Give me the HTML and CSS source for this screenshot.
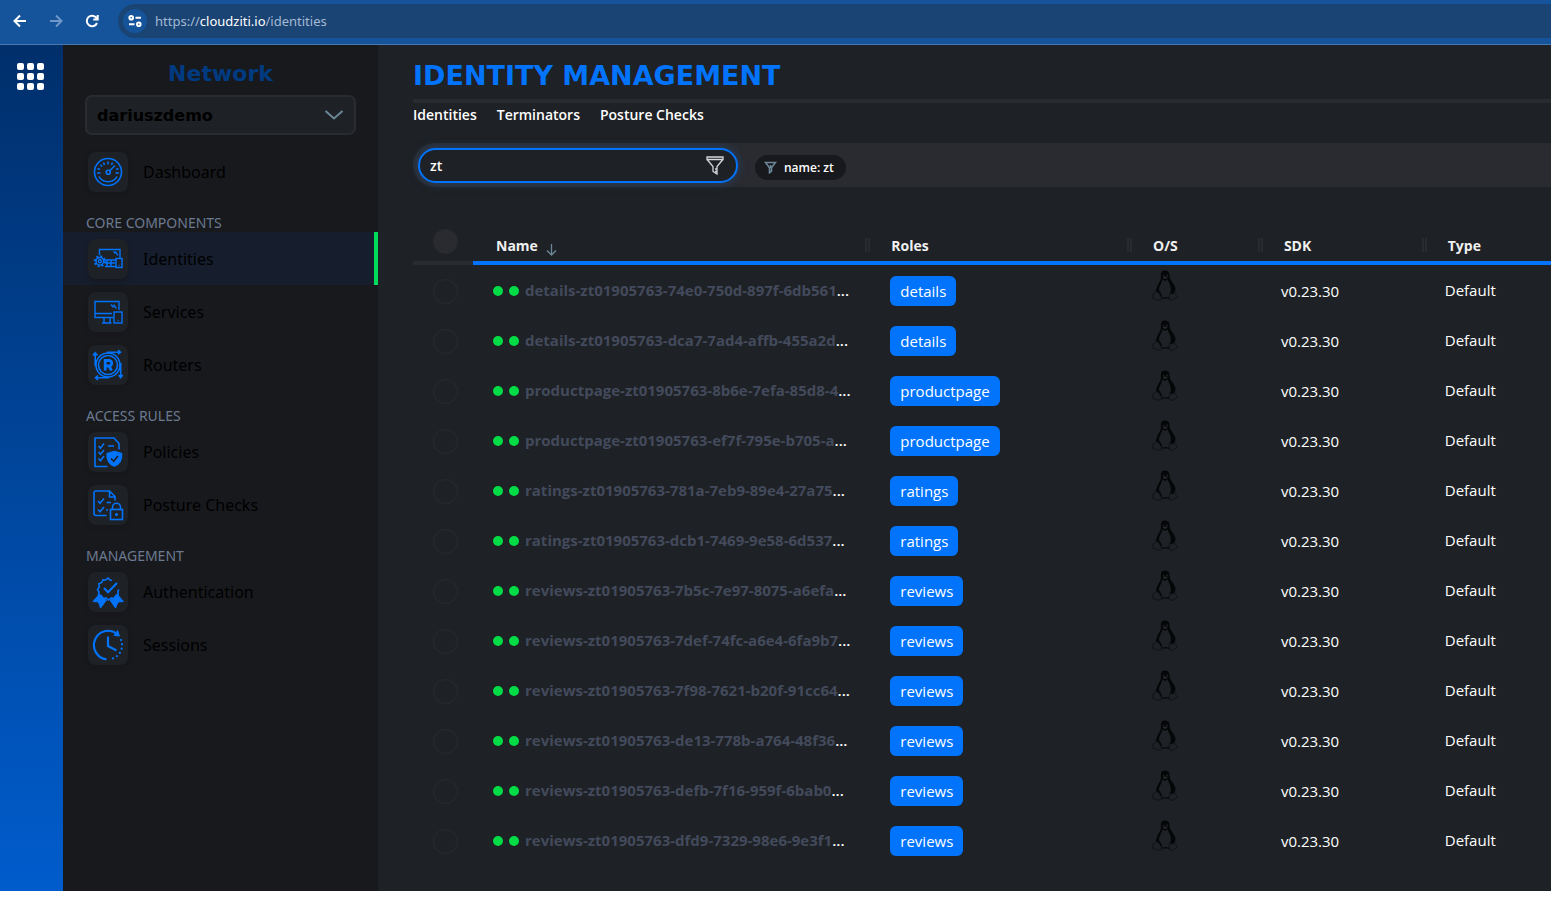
FILE: index.html
```html
<!DOCTYPE html>
<html lang="en">
<head>
<meta charset="utf-8">
<title>Identity Management</title>
<link rel="stylesheet" href="styles.css">
</head>
<body>
<svg class="sprite" aria-hidden="true">
  <symbol id="tux" viewBox="0 0 26 31">
    <path fill="#050607" d="M13 0.500C10 .5 8.700 2.700 8.900 5.500C9 9 8.900 10.200 7.200 12.500C5.600 14.700 5.200 17 4.200 19.400C3.600 21 3.900 22 4.200 23L8.800 27.500L17.500 28L21.500 23.500C22.900 22.500 23.800 20 23.300 17.800C22.600 14.700 20.500 12.500 18.900 10.200C17.400 8 17.800 6.500 17.400 4.300C17 1.700 15.500 .5 13 .5Z"/>
    <path fill="#1e2125" d="M10.500 9.500L13.200 11L15.500 9.300C16.500 12.500 18.800 15 18.800 19C18.800 22.500 18 25 17.300 27.500L9.800 27.500C10.800 24.500 7.500 21.500 6.800 19.500C7.300 15.500 10 12.500 10.500 9.500Z"/>
    <path fill="#1e2125" d="M10.600 5.200a1 1.300 0 1 1 1.600 1.600zM14 5.300a1.200 1.400 0 1 1 2 1.500z"/>
    <path fill="#25272a" d="M10.300 7.600L13 6.300L15.800 7.500L13 9.200Z"/>
    <path fill="#1e2125" stroke="#101214" stroke-width=".8" stroke-linejoin="round" d="M4.700 21.500C6.500 21.700 8 25 9.300 27C10.500 29.500 8.500 30.700 6.300 29.900C4.300 29 2.300 29.200 .9 28.500C.3 27.500 1.200 26 .9 24.500C.8 23.300 3 23.500 4.700 21.500Z"/>
    <path fill="#1e2125" stroke="#101214" stroke-width=".8" stroke-linejoin="round" d="M17.900 22.500C18.500 24.500 20.800 24.500 22.500 22.800C23.700 23 23 25 25.300 26.500C25.600 28 22.500 28.700 21 30C19 31 17 30 17.100 28C17.400 26 17 24 17.900 22.500Z"/>
    <path fill="none" stroke="#08090a" d="M9.500 28.500C12 27.800 14.500 27.800 17.500 28.500"/>
  </symbol>
</svg>

<header class="browser">
  <button class="browser-btn" aria-label="Back"><svg width="14" height="14" viewBox="0 0 14 14"><path d="M13 7H2M7 1.500L1.500 7L7 12.500"/></svg></button>
  <button class="browser-btn dim" aria-label="Forward"><svg width="14" height="14" viewBox="0 0 14 14"><path d="M1 7h11M7 1.500L12.500 7L7 12.500"/></svg></button>
  <button class="browser-btn" aria-label="Reload"><svg width="14" height="14" viewBox="0 0 14 14"><path d="M12 9A5.300 5.300 0 1 1 11.300 3.700L12.500 5.200M12.700 1v4.500H8.300"/></svg></button>
  <div class="address">
    <span class="site-info"><svg width="14" height="12" viewBox="0 0 14 12"><circle cx="3.200" cy="2.800" r="1.800"/><path d="M7.500 2.800H13M1 9.200h5.500"/><circle cx="10.800" cy="9.200" r="1.800"/></svg></span>
    <span class="url">https://<b>cloudziti.io</b>/identities</span>
  </div>
</header>

<div class="app">
  <aside class="rail">
    <button class="apps" aria-label="Apps"><i></i><i></i><i></i><i></i><i></i><i></i><i></i><i></i><i></i></button>
  </aside>

  <nav class="sidebar">
    <label class="network-label" for="network">Network</label>
    <div class="network-box">
      <select id="network" class="network"><option>dariuszdemo</option></select>
      <svg class="chevron" width="20" height="12" viewBox="0 0 20 12"><path d="M1.500 2L10 9.500L18.500 2"/></svg>
    </div>

    <a class="item" href="#"><span class="tile"><svg viewBox="0 0 32 32"><circle cx="16" cy="16" r="13.500"/><circle cx="16.200" cy="16.300" r="2"/><path d="M17.700 14.800L23 9.500M16 5.500v3M11.500 6.500l1 2.500M20.500 6.500l-1 2.500M8.500 8.800l1.500 1.700M5.500 12.500l2.500 1M26.500 12.500l-2.500 1M5 17h3.500M23.500 17H27M7 20.500C10.500 27.500 21.500 27.500 25 20.500"/></svg></span>Dashboard</a>

    <h2 class="group">CORE COMPONENTS</h2>
    <a class="item active" href="#"><span class="tile"><svg viewBox="0 0 32 32" class="thin"><path d="M7.500 12V6.500H28V15M12 17h12M13 20h10M15 17v6M19 17v6M13 23.500h11M21.500 8.500l2 2M23.500 8.500l2.500 4"/><rect x="24" y="15.500" width="6" height="9"/><path d="M26.500 22.500h1"/><circle cx="7.800" cy="18.300" r="3.800"/><circle cx="7.800" cy="18.300" r="1.500"/><circle cx="7.800" cy="18.300" r="5" stroke-dasharray="2 1.900" stroke-width="2"/></svg></span>Identities</a>
    <a class="item" href="#"><span class="tile"><svg viewBox="0 0 32 32" class="thin"><path d="M27 14V5.500H3V21.500H21M3 17.500H20M12 22v4.500M18 22v4.500M10 27H19.500M19 8.500l2.500 3M21.500 8.500l3 4"/><rect x="22" y="16" width="8" height="11"/><path d="M25.500 24.500h1"/></svg></span>Services</a>
    <a class="item" href="#"><span class="tile"><svg viewBox="0 0 32 32"><circle cx="16" cy="16" r="12"/><circle cx="16" cy="16" r="9.500"/><path stroke-width="2.800" d="M13.200 21.500V11.500H17a2.400 2.400 0 0 1 0 5.500H13.500M17 17l2.500 4.500"/><path d="M15 3.200H28M26 1.200l2.500 2L26 5.200M28.700 14V28.500M26.700 26l2 2.700l2-2.700M17 28.800H3.500M6 26.500l-2.500 2.300L6 31M3.200 17V4M1 6.500L3.200 3.700L5.500 6.500"/></svg></span>Routers</a>

    <h2 class="group">ACCESS RULES</h2>
    <a class="item" href="#"><span class="tile"><svg viewBox="0 0 32 32"><path d="M15.500 30.500H3V2H22L27 7.500V13.500M6.500 10l2 2.200L12 7.500M6.500 16l2 2.200L12 14M6.500 22.500l2 2.200L12 20M16 10h6"/><path fill="#0273fb" d="M22.300 15.500L29.500 17.500C30 23 28.500 27.500 22.300 30C16 27.500 14.800 23 15.200 17.500Z"/><path stroke="#1c2025" d="M19 22.500l2.700 2.800L26 20"/></svg></span>Policies</a>
    <a class="item" href="#"><span class="tile"><svg viewBox="0 0 32 32"><path d="M14.500 26.500H4a2 2 0 0 1-2-2V4a2 2 0 0 1 2-2H17.500L23 7.500V11.500M17.500 2.500V8H23M6 12l2 2.300L12 9.500M6 20.500l2 2.300L12 18M14.500 13.500h4.500M14 21h2"/><rect x="18.500" y="20.500" width="12" height="10"/><path d="M20.500 20V18a4 3.700 0 0 1 8 0v2"/><circle cx="24.500" cy="25.500" r=".8"/></svg></span>Posture Checks</a>

    <h2 class="group">MANAGEMENT</h2>
    <a class="item" href="#"><span class="tile"><svg viewBox="0 0 32 32"><path d="M20 4.500L18 4L16 2L13.700 4L11 3.800L9.800 6.500L6.800 7.700L7.300 11L5.500 13.500L7 16L6.500 19L9.500 20L11.500 22.800L14 22L16.500 24L19 22L22 22.500L23.500 20L26.200 18.500L25.800 15.500L27 13.500"/><path stroke-width="2.200" d="M12 12l4 4.200L25 7"/><path fill="#0273fb" stroke-width="1" d="M7.500 18L1 25.500L6.500 26L8.500 32L14.500 24L11 23L9.500 20.500ZM25 18L31.500 25.500L26 26L23.500 32L18 24L21.500 23L23 20.500Z"/></svg></span>Authentication</a>
    <a class="item" href="#"><span class="tile"><svg viewBox="0 0 32 32" class="thick"><path d="M14.500 30.300A14.300 14.300 0 1 1 25 4.800M16 7.500v9.500L24.500 21.500"/><path fill="#0273fb" stroke-width="1" d="M25.500 1.500L27.500 7L22 6.500Z"/><path stroke-linecap="round" stroke-dasharray="0.100 4.300" d="M29 11A14 14 0 0 1 17.500 30.200"/></svg></span>Sessions</a>
  </nav>

  <main class="main">
    <h1 class="title">IDENTITY MANAGEMENT</h1>
    <div class="tabs">
      <a href="#">Identities</a><a href="#">Terminators</a><a href="#">Posture Checks</a>
    </div>
    <div class="filters">
      <div class="search">
        <input class="search-input" type="text" aria-label="Filter" value="zt">
        <svg class="funnel" width="18" height="19" viewBox="0 0 18 19"><path d="M1 1h16v2.500H1zM1.500 4L7 10.500V15.500L11 18V10.500L16.500 4M9 13h2M9 15.500h2"/></svg>
      </div>
      <span class="chip"><svg width="13" height="13" viewBox="0 0 13 13"><path d="M1.500 1.500h10L7.500 6.700v3.500l-2 1.500v-5zM6.500 4v3"/></svg>name: zt</span>
    </div>

    <table class="grid">
      <colgroup><col class="c-check"><col class="c-name"><col class="c-roles"><col class="c-os"><col class="c-sdk"><col></colgroup>
      <thead>
        <tr>
          <th class="check"><input type="checkbox" class="round filled" aria-label="Select all"></th>
          <th class="name-head">Name <svg class="sort" width="11" height="12" viewBox="0 0 11 12"><path d="M5.500 0v11M1 6.500l4.500 4.500L10 6.500"/></svg></th>
          <th>Roles</th><th>O/S</th><th>SDK</th><th class="last">Type</th>
        </tr>
      </thead>
      <tbody>
        <tr><td class="check"><input type="checkbox" class="round" aria-label="Select row"></td><td><div class="ident"><i></i><i></i><b>details-zt01905763-74e0-750d-897f-6db561<em>...</em></b></div></td><td class="roles"><span class="pill">details</span></td><td class="os"><svg><use href="#tux"/></svg></td><td class="plain sdk">v0.23.30</td><td class="plain">Default</td></tr>
        <tr><td class="check"><input type="checkbox" class="round" aria-label="Select row"></td><td><div class="ident"><i></i><i></i><b>details-zt01905763-dca7-7ad4-affb-455a2d<em>...</em></b></div></td><td class="roles"><span class="pill">details</span></td><td class="os"><svg><use href="#tux"/></svg></td><td class="plain sdk">v0.23.30</td><td class="plain">Default</td></tr>
        <tr><td class="check"><input type="checkbox" class="round" aria-label="Select row"></td><td><div class="ident"><i></i><i></i><b>productpage-zt01905763-8b6e-7efa-85d8-4<em>...</em></b></div></td><td class="roles"><span class="pill">productpage</span></td><td class="os"><svg><use href="#tux"/></svg></td><td class="plain sdk">v0.23.30</td><td class="plain">Default</td></tr>
        <tr><td class="check"><input type="checkbox" class="round" aria-label="Select row"></td><td><div class="ident"><i></i><i></i><b>productpage-zt01905763-ef7f-795e-b705-a<em>...</em></b></div></td><td class="roles"><span class="pill">productpage</span></td><td class="os"><svg><use href="#tux"/></svg></td><td class="plain sdk">v0.23.30</td><td class="plain">Default</td></tr>
        <tr><td class="check"><input type="checkbox" class="round" aria-label="Select row"></td><td><div class="ident"><i></i><i></i><b>ratings-zt01905763-781a-7eb9-89e4-27a75<em>...</em></b></div></td><td class="roles"><span class="pill">ratings</span></td><td class="os"><svg><use href="#tux"/></svg></td><td class="plain sdk">v0.23.30</td><td class="plain">Default</td></tr>
        <tr><td class="check"><input type="checkbox" class="round" aria-label="Select row"></td><td><div class="ident"><i></i><i></i><b>ratings-zt01905763-dcb1-7469-9e58-6d537<em>...</em></b></div></td><td class="roles"><span class="pill">ratings</span></td><td class="os"><svg><use href="#tux"/></svg></td><td class="plain sdk">v0.23.30</td><td class="plain">Default</td></tr>
        <tr><td class="check"><input type="checkbox" class="round" aria-label="Select row"></td><td><div class="ident"><i></i><i></i><b>reviews-zt01905763-7b5c-7e97-8075-a6efa<em>...</em></b></div></td><td class="roles"><span class="pill">reviews</span></td><td class="os"><svg><use href="#tux"/></svg></td><td class="plain sdk">v0.23.30</td><td class="plain">Default</td></tr>
        <tr><td class="check"><input type="checkbox" class="round" aria-label="Select row"></td><td><div class="ident"><i></i><i></i><b>reviews-zt01905763-7def-74fc-a6e4-6fa9b7<em>...</em></b></div></td><td class="roles"><span class="pill">reviews</span></td><td class="os"><svg><use href="#tux"/></svg></td><td class="plain sdk">v0.23.30</td><td class="plain">Default</td></tr>
        <tr><td class="check"><input type="checkbox" class="round" aria-label="Select row"></td><td><div class="ident"><i></i><i></i><b>reviews-zt01905763-7f98-7621-b20f-91cc64<em>...</em></b></div></td><td class="roles"><span class="pill">reviews</span></td><td class="os"><svg><use href="#tux"/></svg></td><td class="plain sdk">v0.23.30</td><td class="plain">Default</td></tr>
        <tr><td class="check"><input type="checkbox" class="round" aria-label="Select row"></td><td><div class="ident"><i></i><i></i><b>reviews-zt01905763-de13-778b-a764-48f36<em>...</em></b></div></td><td class="roles"><span class="pill">reviews</span></td><td class="os"><svg><use href="#tux"/></svg></td><td class="plain sdk">v0.23.30</td><td class="plain">Default</td></tr>
        <tr><td class="check"><input type="checkbox" class="round" aria-label="Select row"></td><td><div class="ident"><i></i><i></i><b>reviews-zt01905763-defb-7f16-959f-6bab0<em>...</em></b></div></td><td class="roles"><span class="pill">reviews</span></td><td class="os"><svg><use href="#tux"/></svg></td><td class="plain sdk">v0.23.30</td><td class="plain">Default</td></tr>
        <tr><td class="check"><input type="checkbox" class="round" aria-label="Select row"></td><td><div class="ident"><i></i><i></i><b>reviews-zt01905763-dfd9-7329-98e6-9e3f1<em>...</em></b></div></td><td class="roles"><span class="pill">reviews</span></td><td class="os"><svg><use href="#tux"/></svg></td><td class="plain sdk">v0.23.30</td><td class="plain">Default</td></tr>
      </tbody>
    </table>
  </main>
</div>
</body>
</html>
```
FILE: styles.css
```css
*, *::after { box-sizing: border-box; }

body {
  margin: 0;
  min-height: 100vh;
  display: flex;
  flex-direction: column;
  padding-bottom: 10px;
  background: #fff;
  color: #fff;
  font-family: "Open Sans", "Noto Sans", sans-serif;
  font-size: 14px;
}

a { color: inherit; text-decoration: none; }
button { border: 0; padding: 0; background: none; }
.sprite { display: none; }

/* Browser bar */
.browser {
  display: flex;
  align-items: center;
  gap: 22px;
  height: 45px;
  padding: 0 0 3px 13px;
  background: #15549a;
  border-bottom: 1px solid #4a79b0;
}
.browser-btn { display: flex; }
.browser-btn svg, .site-info svg { fill: none; stroke: #fff; stroke-width: 2; }
.browser-btn.dim svg { stroke: #6f98c8; }
.address {
  flex: 1;
  display: flex;
  align-items: center;
  gap: 8px;
  height: 34px;
  margin-left: -3px;
  padding-left: 5px;
  background: #1a4473;
  border-radius: 17px 0 0 17px;
}
.site-info {
  display: flex;
  align-items: center;
  justify-content: center;
  width: 24px;
  height: 24px;
  border-radius: 50%;
  background: #15549a;
}
.url { font-family: "Noto Sans", sans-serif; font-size: 13px; color: #a4b9d4; }
.url b { font-weight: 400; color: #fff; }

/* Page frame */
.app { flex: 1; display: flex; background: #1e2125; }
.rail {
  flex: none;
  width: 63px;
  padding: 18px 0 0 17px;
  background: linear-gradient(#002f6b, #005ccc);
}
.apps { display: grid; grid-template-columns: repeat(3, 7px); gap: 3px; }
.apps i { height: 7px; border-radius: 2px; background: #fff; }

/* Sidebar */
.sidebar {
  flex: none;
  width: 315px;
  padding-top: 14px;
  background: #18191d;
  font-family: "Noto Sans", "Open Sans", sans-serif;
}
.network-label {
  display: block;
  line-height: 30px;
  text-align: center;
  font-family: "DejaVu Sans", sans-serif;
  font-weight: 700;
  font-size: 22px;
  color: #003b82;
}
.network-box { position: relative; margin: 6px 22px 10px; }
.network {
  display: block;
  width: 100%;
  height: 40px;
  padding: 0 10px;
  appearance: none;
  border: 2px solid #2a2b30;
  border-radius: 7px;
  background: #1e2125;
  color: #000;
  font-family: "DejaVu Sans", sans-serif;
  font-weight: 700;
  font-size: 16px;
}
.chevron {
  position: absolute;
  right: 12px;
  top: 14px;
  fill: none;
  stroke: #6b8797;
  stroke-width: 2;
  pointer-events: none;
}
.group {
  margin: 0;
  padding: 15px 23px 0;
  line-height: 19px;
  font-size: 14px;
  font-weight: 400;
  color: #6b7a90;
}
.item {
  display: flex;
  align-items: center;
  gap: 15px;
  height: 53px;
  padding-left: 25px;
  font-size: 16px;
  color: #000;
}
.item.active { background: #161e2e; border-right: 4px solid #00dc5a; }
.tile {
  display: flex;
  align-items: center;
  justify-content: center;
  width: 40px;
  height: 40px;
  border-radius: 8px;
  background: #1e2125;
  box-shadow: 0 2px 4px #16171b;
}
.tile svg { width: 32px; height: 32px; fill: none; stroke: #0273fb; stroke-width: 1.6; }
.tile .thin { stroke-width: 1.4; }
.tile .thick { stroke-width: 2.2; }

/* Main column */
.main { flex: 1; min-width: 0; padding: 14px 0 25px 35px; }
.title {
  margin: 0;
  line-height: 34px;
  padding-bottom: 6px;
  border-bottom: 4px solid #2a2b30;
  font-family: "DejaVu Sans", sans-serif;
  font-size: 27px;
  font-weight: 700;
  color: #0273fb;
}
.tabs { display: flex; gap: 20px; line-height: 24px; font-weight: 600; }
.filters {
  display: flex;
  align-items: center;
  gap: 17px;
  height: 44px;
  margin: 16px 0 38px;
  padding-left: 5px;
  border-radius: 22px 0 0 22px;
  background: #2a2b30;
}
.search { position: relative; width: 320px; }
.search-input {
  display: block;
  width: 100%;
  height: 35px;
  padding: 0 40px 0 10px;
  border: 2px solid #0273fb;
  border-radius: 18px;
  outline: 0;
  background: #1e2125;
  box-shadow: 0 0 10px #27446b;
  color: #fff;
  font: 600 14px "Open Sans", sans-serif;
}
.funnel {
  position: absolute;
  right: 14px;
  top: 8px;
  fill: none;
  stroke: #d5d7da;
  stroke-width: 1.3;
}
.chip {
  display: flex;
  align-items: center;
  gap: 7px;
  height: 25px;
  margin-top: 4px;
  padding: 0 12px 0 9px;
  border-radius: 13px;
  background: #18191d;
  font-size: 12px;
  font-weight: 600;
}
.chip svg { fill: none; stroke: #6b8797; stroke-width: 1.6; }

/* Table */
.grid { width: 100%; table-layout: fixed; border-collapse: separate; border-spacing: 0; }
.c-check { width: 60px; }
.c-name { width: 35%; }
.c-roles { width: 23%; }
.c-os { width: 11.5%; }
.c-sdk { width: 14.4%; }
.grid th {
  position: relative;
  height: 40px;
  padding: 4px 20px 0;
  border-bottom: 4px solid #0273fb;
  text-align: left;
  font-size: 14px;
  font-weight: 700;
  color: #f0f0f0;
}
.grid th.name-head { padding-top: 5px; padding-left: 23px; }
.grid th::after {
  content: "";
  position: absolute;
  right: 1px;
  top: 13px;
  width: 5px;
  height: 14px;
  border: solid #2a2b30;
  border-width: 0 2px;
}
.grid th.check { border-color: #2a2b30; }
.grid th.check::after, .grid th.last::after { display: none; }
.sort { margin-left: 4px; vertical-align: -5px; fill: none; stroke: #6b8797; stroke-width: 1.3; }
.grid td { height: 50px; padding: 0 0 0 20px; font-size: 15px; }
.grid .check { padding: 2px 0 0 20px; }
.grid thead .check { vertical-align: top; padding-top: 4px; }
.round {
  display: block;
  appearance: none;
  width: 25px;
  height: 25px;
  margin: 0;
  border: 1px solid #2a2b30;
  border-radius: 50%;
}
.round.filled { background: #2a2b30; }
.ident { display: flex; align-items: center; gap: 6px; white-space: nowrap; }
.ident i { width: 10px; height: 10px; margin-top: 2px; border-radius: 50%; background: #00dc46; }
.ident b { font-weight: 700; color: #434a5c; }
.ident em { font-style: normal; font-weight: 600; color: #fff; }
.grid .roles { padding: 2px 0 0 19px; }
.pill {
  display: inline-block;
  height: 30px;
  line-height: 30px;
  padding: 0 10px;
  border-radius: 6px;
  background: #0273fb;
}
.grid .os { padding: 0 0 10px 19px; }
.os svg { display: block; width: 26px; height: 31px; }
.grid .plain { padding-left: 17px; }
.grid .sdk { padding-top: 2px; }
```
